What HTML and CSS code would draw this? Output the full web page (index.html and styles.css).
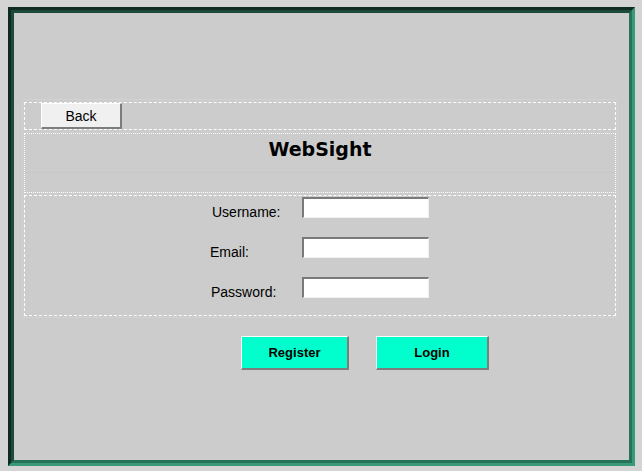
FILE: index.html
```html
<!DOCTYPE html>
<html>
<head>
<meta charset="utf-8">
<title>WebSight</title>
<link rel="stylesheet" href="styles.css">
</head>
<body>
<div class="frame">
  <div class="frame-inner">
    <div class="group">
      <div class="panel panel-top">
        <button class="btn btn-back">Back</button>
      </div>
      <div class="panel panel-title">
        <div class="title">WebSight</div>
      </div>
      <div class="panel panel-form">
        <div class="form-grid">
          <label class="lbl lbl-user">Username:</label>
          <input class="field" type="text">
          <label class="lbl lbl-email">Email:</label>
          <input class="field" type="text">
          <label class="lbl lbl-pass">Password:</label>
          <input class="field" type="password">
        </div>
      </div>
    </div>
    <div class="actions">
      <button class="btn btn-action btn-register">Register</button>
      <button class="btn btn-action btn-login">Login</button>
    </div>
  </div>
</div>
</body>
</html>
```
FILE: styles.css
```css
html, body {
  margin: 0;
  padding: 0;
}
body {
  background: #d4d4d4;
  font-family: "Liberation Sans", Arial, sans-serif;
  width: 642px;
  height: 471px;
  overflow: hidden;
}
.frame {
  margin: 7px 0 0 8px;
  width: 627px;
  height: 459px;
  box-sizing: border-box;
  border-style: solid;
  border-width: 3px;
  border-color: #0f2a21 #3a9a78 #3a9a78 #0f2a21;
}
.frame-inner {
  height: 100%;
  box-sizing: border-box;
  border-style: solid;
  border-width: 3px;
  border-color: #1c4a3b #25745a #25745a #1c4a3b;
  background: #cccccc;
  padding-top: 86px;
  padding-left: 8px;
}
.group {
  width: 596px;
  box-sizing: border-box;
  border: 1px solid #d2d2d2;
  padding: 2px 1px 1px 1px;
  display: flex;
  flex-direction: column;
}
.panel {
  box-sizing: border-box;
  border: 1px dashed #ffffff;
}
.panel-top {
  height: 28px;
  padding-left: 16px;
}
.panel-title {
  margin-top: 3px;
  height: 60px;
  border-style: dotted;
}
.title {
  height: 39px;
  border-bottom: 1px dotted #c3c3c3;
  text-align: center;
  font-family: "DejaVu Sans", sans-serif;
  font-weight: bold;
  font-size: 19px;
  line-height: 28px;
  padding-top: 1px;
  box-sizing: border-box;
  color: #000;
}
.panel-form {
  margin-top: 2px;
  height: 121px;
  padding: 1px 0 0 185px;
}
.form-grid {
  display: grid;
  grid-template-columns: 92px 127px;
  grid-auto-rows: 21px;
  row-gap: 19px;
}
.lbl {
  font-size: 14px;
  line-height: 16px;
  padding-top: 7px;
  color: #000;
  white-space: nowrap;
}
.lbl-user { padding-left: 2px; }
.lbl-email { padding-left: 0; }
.lbl-pass { padding-left: 1px; }
.field {
  width: 127px;
  height: 21px;
  box-sizing: border-box;
  margin: 0;
  padding: 0 2px;
  background: #fff;
  border-style: solid;
  border-width: 2px 1px 1px 2px;
  border-color: #7a7a7a #f2f2f2 #f2f2f2 #7a7a7a;
  outline: none;
  font: 13px "Liberation Sans", sans-serif;
}
.btn {
  margin: 0;
  padding: 0;
  box-sizing: border-box;
  font-family: "Liberation Sans", Arial, sans-serif;
  font-size: 13px;
  color: #000;
  border-style: solid;
  border-width: 1px 2px 2px 1px;
  border-color: #ffffff #7d7d7d #7d7d7d #ffffff;
  cursor: pointer;
}
.btn-back {
  width: 81px;
  height: 26px;
  background: #f0f0f0;
  font-size: 14px;
}
.actions {
  display: flex;
  gap: 27px;
  margin-top: 18px;
  padding-left: 219px;
}
.btn-action {
  height: 34px;
  background: #00ffcc;
  font-weight: bold;
}
.btn-register { width: 108px; }
.btn-login { width: 113px; }
```
